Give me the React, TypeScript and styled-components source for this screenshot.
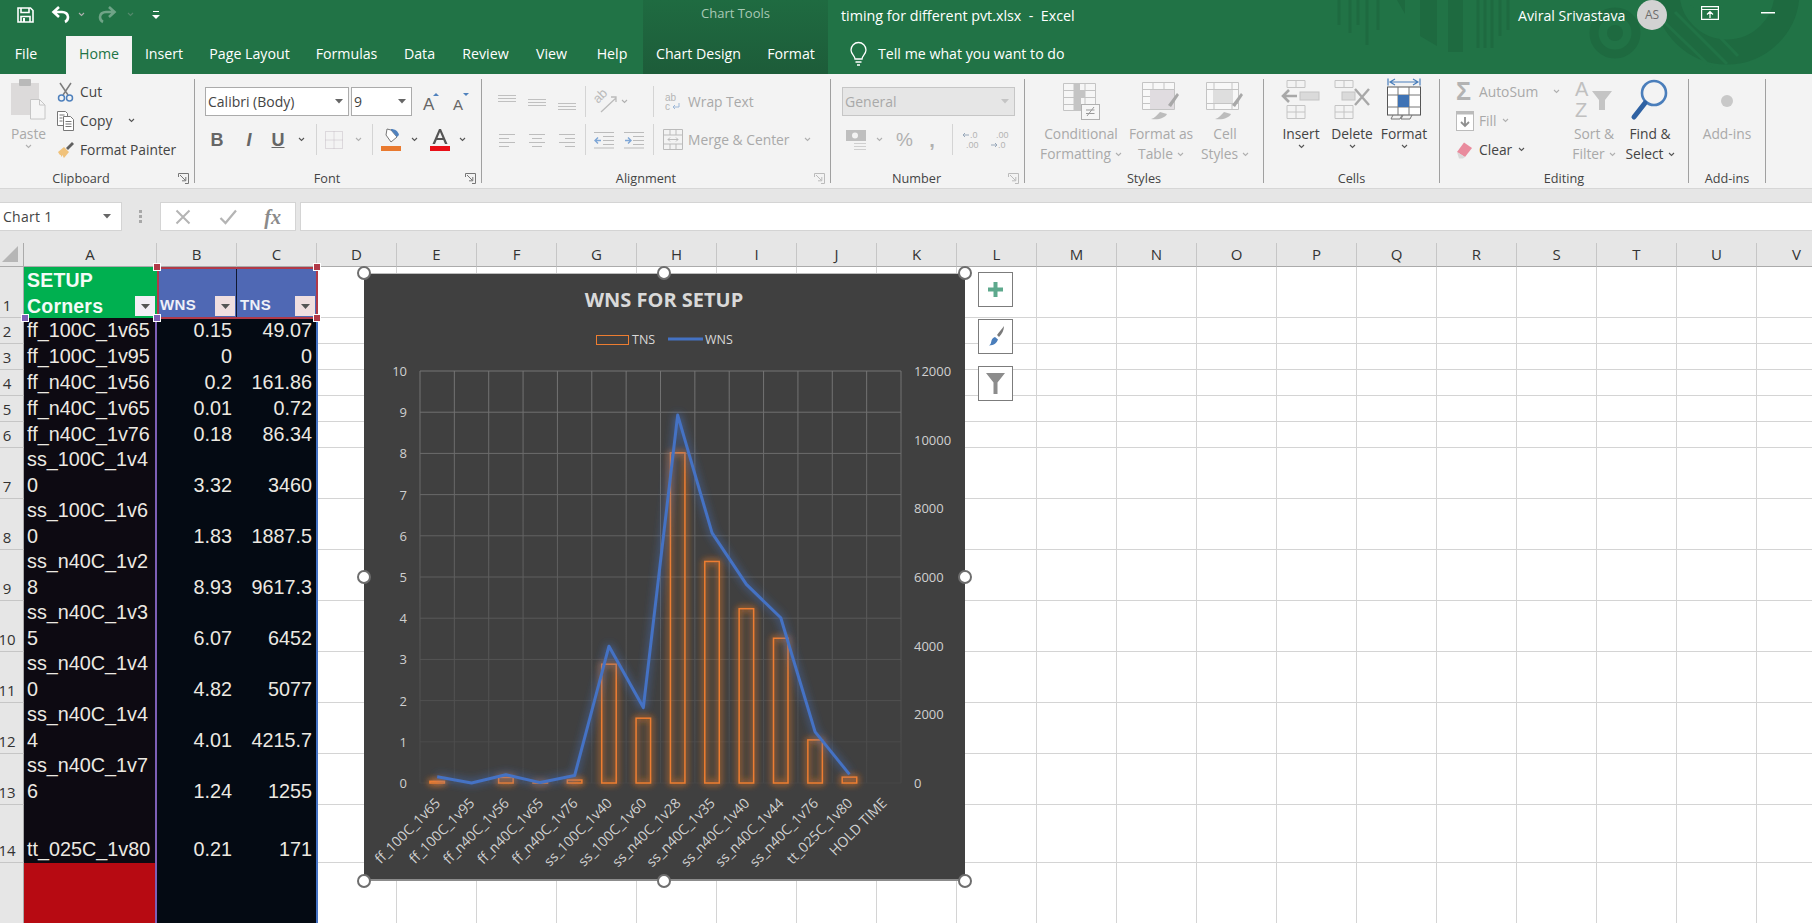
import React from 'react';
import styled, { createGlobalStyle } from 'styled-components';

const GlobalStyle = createGlobalStyle`
  html, body { margin: 0; padding: 0; background: #fff; overflow: hidden; }
  #root { width: 1812px; height: 923px; }
  svg { overflow: visible; }
`;

const UI_FONT = `'Open Sans', 'Noto Sans', sans-serif`;
const CELL_FONT = `'Liberation Sans', Arial, sans-serif`;
const DIM = '#a9a9a9';
const INK = '#444444';

// Window shell
const Page = styled.div`
  width: 1812px;
  height: 923px;
  display: flex;
  flex-direction: column;
  overflow: hidden;
  background: #e6e6e6;
  font-family: ${UI_FONT};
`;

const Header = styled.header`
  position: relative;
  height: 74px;
  background: #217346;
  color: #fff;
  flex: none;
  overflow: hidden;
`;

const Pattern = styled.svg`
  position: absolute;
  right: 0;
  top: 0;
`;

const ContextBand = styled.div`
  position: absolute;
  left: 643px;
  top: 0;
  width: 185px;
  height: 74px;
  background: linear-gradient(#1f6b41, #1d5c39);
`;

const TitleRow = styled.div`
  position: relative;
  height: 36px;
  display: flex;
  align-items: center;
`;

const Qat = styled.div`
  width: 643px;
  height: 36px;
  padding: 0 0 7px 17px;
  box-sizing: border-box;
  display: flex;
  align-items: center;
`;

const QatSlot = styled.span<{ $w: number; $dim?: boolean }>`
  width: ${p => p.$w}px;
  display: flex;
  align-items: center;
  opacity: ${p => (p.$dim ? 0.35 : 1)};
`;

const ContextTitle = styled.div`
  width: 185px;
  height: 36px;
  padding-bottom: 10px;
  box-sizing: border-box;
  font-size: 13px;
  color: #a9c9b6;
  display: flex;
  align-items: center;
  justify-content: center;
`;

const DocTitle = styled.div`
  margin-left: 13px;
  width: 677px;
  font-size: 14.3px;
  padding-bottom: 6px;
  white-space: pre;
`;

const UserName = styled.div`
  width: 119px;
  font-size: 14.2px;
  padding-bottom: 6px;
`;

const Avatar = styled.div`
  width: 30px;
  height: 30px;
  border-radius: 50%;
  background: #d2d2d2;
  color: #6d6d6d;
  font-size: 12px;
  display: flex;
  align-items: center;
  justify-content: center;
  margin-bottom: 7px;
`;

const WinButtons = styled.div`
  margin-left: 34px;
  padding-bottom: 10px;
  display: flex;
  align-items: center;
  gap: 42px;
`;

const TabRow = styled.nav`
  position: relative;
  height: 38px;
  display: flex;
  align-items: stretch;
`;

const Tab = styled.div<{ $w: number; $active?: boolean }>`
  width: ${p => p.$w}px;
  display: flex;
  align-items: center;
  justify-content: center;
  font-size: 14.2px;
  padding-bottom: 3px;
  box-sizing: border-box;
  background: ${p => (p.$active ? '#f3f3f3' : 'transparent')};
  color: ${p => (p.$active ? '#217346' : '#fff')};
`;

const TellMe = styled.div`
  margin-left: 22px;
  display: flex;
  align-items: center;
  gap: 11px;
  font-size: 14.2px;
  padding-bottom: 3px;
`;

// Ribbon
const Ribbon = styled.section`
  height: 115px;
  box-sizing: border-box;
  padding-top: 5px;
  background: #f3f3f3;
  display: flex;
  border-bottom: 1px solid #d6d6d6;
  flex: none;
`;

const Group = styled.div<{ $w: number }>`
  position: relative;
  width: ${p => p.$w}px;
  height: 104px;
  box-sizing: border-box;
  border-right: 1px solid #a0a0a0;
  display: flex;
  flex-direction: column;
  flex: none;
`;

const GroupBody = styled.div<{ $pl?: number }>`
  flex: 1;
  min-height: 0;
  display: flex;
  padding-left: ${p => p.$pl ?? 0}px;
`;

const GroupLabel = styled.div<{ $pr?: number }>`
  height: 16px;
  margin-bottom: -3px;
  padding-right: ${p => p.$pr ?? 0}px;
  font-size: 12.7px;
  line-height: 16px;
  color: #444;
  text-align: center;
`;

const Launcher = styled.svg`
  position: absolute;
  right: 5px;
  bottom: -1px;
`;

const BigButton = styled.div<{ $w: number }>`
  width: ${p => p.$w}px;
  display: flex;
  flex-direction: column;
  align-items: center;
  flex: none;
`;

const BigIcon = styled.div`
  height: 45px;
  display: flex;
  align-items: flex-end;
  justify-content: center;
  padding-bottom: 4px;
  box-sizing: border-box;
`;

const BigText = styled.div<{ $dim?: boolean }>`
  font-size: 13.8px;
  line-height: 20px;
  color: ${p => (p.$dim ? DIM : INK)};
  text-align: center;
  white-space: nowrap;
  display: flex;
  align-items: center;
  gap: 4px;
`;

const ListColumn = styled.div<{ $w?: number }>`
  width: ${p => (p.$w ? `${p.$w}px` : 'auto')};
  margin-top: -2px;
  display: flex;
  flex-direction: column;
  flex: none;
`;

const ListRow = styled.div`
  height: 29px;
  display: flex;
  align-items: center;
`;

const ListIcon = styled.span<{ $w?: number }>`
  width: ${p => p.$w ?? 23}px;
  display: flex;
  align-items: center;
  flex: none;
`;

const ToolText = styled.span<{ $dim?: boolean }>`
  font-size: 13.8px;
  color: ${p => (p.$dim ? DIM : INK)};
  white-space: nowrap;
`;

const RowStack = styled.div`
  padding-top: 8px;
  display: flex;
  flex-direction: column;
  gap: 9px;
`;

const ToolRow = styled.div`
  height: 29px;
  display: flex;
  align-items: center;
`;

const Slot = styled.span<{ $w: number; $ml?: number }>`
  width: ${p => p.$w}px;
  margin-left: ${p => p.$ml ?? 0}px;
  display: flex;
  align-items: center;
  justify-content: center;
  flex: none;
`;

const Sep = styled.span<{ $ml?: number }>`
  width: 1px;
  height: 31px;
  margin-left: ${p => p.$ml ?? 0}px;
  background: #d4d4d4;
  flex: none;
`;

const Combo = styled.div<{ $w: number; $disabled?: boolean; $ml?: number }>`
  width: ${p => p.$w}px;
  height: 29px;
  margin-left: ${p => p.$ml ?? 0}px;
  box-sizing: border-box;
  padding: 0 5px 0 2px;
  background: ${p => (p.$disabled ? '#e6e6e6' : '#fff')};
  border: 1px solid ${p => (p.$disabled ? '#c6c6c6' : '#ababab')};
  display: flex;
  align-items: center;
  justify-content: space-between;
  font-size: 14px;
  color: ${p => (p.$disabled ? DIM : INK)};
  flex: none;
`;

const GlyphText = styled.span<{ $size: number; $color?: string; $weight?: number; $italic?: boolean; $under?: boolean; $serif?: boolean }>`
  font-family: ${p => (p.$serif ? `'Liberation Serif', serif` : CELL_FONT)};
  font-size: ${p => p.$size}px;
  line-height: 1;
  font-weight: ${p => p.$weight ?? 400};
  font-style: ${p => (p.$italic ? 'italic' : 'normal')};
  text-decoration: ${p => (p.$under ? 'underline' : 'none')};
  color: ${p => p.$color ?? '#666'};
`;

const RibbonLabel = styled(ToolText)<{ $ml: number }>`
  margin-left: ${p => p.$ml}px;
`;

// Formula bar
const FormulaBar = styled.div`
  height: 54px;
  padding: 13px 0 12px;
  box-sizing: border-box;
  display: flex;
  align-items: stretch;
  flex: none;
`;

const NameBox = styled.div`
  width: 122px;
  box-sizing: border-box;
  padding: 0 10px 0 3px;
  background: #fff;
  border: 1px solid #d4d4d4;
  border-left: none;
  display: flex;
  align-items: center;
  justify-content: space-between;
  font-size: 14px;
  letter-spacing: 0.3px;
  color: #444;
`;

const Grip = styled.div`
  width: 38px;
  display: flex;
  align-items: center;
  justify-content: center;
`;

const FxButtons = styled.div`
  width: 136px;
  box-sizing: border-box;
  background: #fff;
  border: 1px solid #d4d4d4;
  display: flex;
  align-items: center;
  justify-content: space-between;
  padding: 0 14px 0 14px;
`;

const FormulaInput = styled.div`
  flex: 1;
  margin-left: 4px;
  background: #fff;
  border: 1px solid #d4d4d4;
  border-right: none;
`;

// Sheet
const Sheet = styled.main`
  position: relative;
  flex: 1;
  overflow: hidden;
  background: #fff;
`;

const SheetGrid = styled.div`
  display: grid;
  grid-template-columns: 24px 133px repeat(21, 80px);
  grid-template-rows: 24px 51px repeat(5, 26px) repeat(7, 51px) 58px 70px;
  width: 1837px;
`;

const Corner = styled.div`
  background: #e6e6e6;
  border-right: 1px solid #ababab;
  border-bottom: 1px solid #ababab;
  box-sizing: border-box;
  display: flex;
  align-items: flex-end;
  justify-content: center;
  padding: 0 4px 4px 0;
`;

const ColHead = styled.div`
  background: #e6e6e6;
  border-right: 1px solid #c6c6c6;
  border-bottom: 1px solid #ababab;
  box-sizing: border-box;
  font-size: 15px;
  color: #333;
  text-align: center;
  line-height: 23px;
`;

const RowHead = styled.div`
  background: #e6e6e6;
  border-right: 1px solid #ababab;
  border-bottom: 1px solid #c6c6c6;
  box-sizing: border-box;
  font-size: 15px;
  line-height: 23px;
  color: #333;
  padding-right: 9px;
  text-align: center;
  display: flex;
  align-items: flex-end;
  justify-content: center;
`;

const cellBg: Record<string, string> = {
  green: '#00b050',
  blue: '#4f68b4',
  name: '#0d0a12',
  value: '#040a13',
  red: '#b70a12',
  empty: '#fff',
};

const Cell = styled.div<{ $kind: string }>`
  position: relative;
  box-sizing: border-box;
  background: ${p => cellBg[p.$kind]};
  border-right: 1px solid ${p => (p.$kind === 'empty' ? '#d4d4d4' : p.$kind === 'blue' ? '#101830' : cellBg[p.$kind])};
  border-bottom: 1px solid ${p => (p.$kind === 'empty' ? '#d4d4d4' : cellBg[p.$kind])};
  font-family: ${CELL_FONT};
  color: #ece9e2;
  overflow: hidden;
`;

const NameText = styled.div`
  position: absolute;
  left: 3px;
  right: 3px;
  bottom: 0;
  font-size: 19.8px;
  line-height: 25.5px;
  word-break: break-all;
`;

const ValueText = styled.div`
  position: absolute;
  right: 4px;
  bottom: 0;
  font-size: 19.8px;
  line-height: 25.5px;
`;

const HeadBig = styled.div`
  padding-left: 3px;
  font-size: 19.5px;
  font-weight: 700;
  line-height: 26px;
  color: #f4fbf6;
  letter-spacing: 0.2px;
`;

const HeadSmall = styled.div`
  position: absolute;
  left: 3px;
  bottom: 2px;
  font-size: 15px;
  font-weight: 700;
  line-height: 20px;
  color: #eef0f8;
  letter-spacing: 0.4px;
`;

const FilterButton = styled.div<{ $tint: string }>`
  position: absolute;
  right: 1px;
  bottom: 1px;
  width: 20px;
  height: 20px;
  background: ${p => p.$tint};
  display: flex;
  align-items: center;
  justify-content: center;
`;

const RangeBox = styled.div<{ $x: number; $y: number; $w: number; $h: number; $color: string; $only?: boolean }>`
  position: absolute;
  left: ${p => p.$x}px;
  top: ${p => p.$y}px;
  width: ${p => p.$w}px;
  height: ${p => p.$h}px;
  box-sizing: border-box;
  border: 2px solid ${p => p.$color};
  ${p => p.$only && 'border-top: none; border-bottom: none; border-left: none;'}
`;

const RangeHandle = styled.div<{ $x: number; $y: number; $color: string }>`
  position: absolute;
  left: ${p => p.$x - 3}px;
  top: ${p => p.$y - 3}px;
  width: 6px;
  height: 6px;
  background: ${p => p.$color};
  outline: 1px solid #fff;
`;

const ChartFrame = styled.div`
  position: absolute;
  left: 364px;
  top: 30px;
  width: 601px;
  height: 608px;
  background: #404040;
  box-shadow: inset 0 1px 0 #bdbdbd;
  border-bottom: 2px solid #8c8c8c;
  box-sizing: border-box;
`;

const ChartSvg = styled.svg`
  display: block;
  font-family: ${UI_FONT};
`;

const SizeHandle = styled.div<{ $x: number; $y: number }>`
  position: absolute;
  left: ${p => p.$x - 7}px;
  top: ${p => p.$y - 7}px;
  width: 14px;
  height: 14px;
  box-sizing: border-box;
  border-radius: 50%;
  background: #fff;
  border: 2.5px solid #6e6e6e;
`;

const ChartTools = styled.div`
  position: absolute;
  left: 978px;
  top: 29px;
  display: flex;
  flex-direction: column;
  gap: 12px;
`;

const ChartToolButton = styled.div`
  width: 35px;
  height: 35px;
  box-sizing: border-box;
  background: #fff;
  border: 1px solid #7c7c7c;
  display: flex;
  align-items: center;
  justify-content: center;
`;

// Icons
const Chev = ({ dark }: { dark?: boolean }) => (
  <svg width="7" height="5" viewBox="0 0 7 5">
    <path d="M1 1l2.500 2.500L6 1" fill="none" stroke={dark ? '#555' : '#b0b0b0'} strokeWidth="1.1" />
  </svg>
);

const DropArrow = ({ color = '#666' }: { color?: string }) => (
  <svg width="8" height="5" viewBox="0 0 8 5"><path d="M0 0h8L4 4.500z" fill={color} /></svg>
);

const LauncherIcon = ({ dim }: { dim?: boolean }) => (
  <Launcher width="11" height="11" viewBox="0 0 11 11">
    <path d="M.5 4V.5h10v10H7M2 2l5.500 5.500M7.800 4v3.800H4" fill="none" stroke={dim ? '#bbb' : '#777'} />
  </Launcher>
);

const AlignV = ({ y }: { y: number }) => (
  <svg width="18" height="18" viewBox="0 0 18 18">
    {[0, 3, 6].map(d => <rect key={d} x="0" y={y + d} width="18" height="1" fill="#c0c0c0" />)}
  </svg>
);

const AlignH = ({ kind }: { kind: 'l' | 'c' | 'r' }) => {
  const x = (w: number) => (kind === 'l' ? 0 : kind === 'c' ? (16 - w) / 2 : 16 - w);
  return (
    <svg width="16" height="16" viewBox="0 0 16 16">
      {[16, 10, 16, 10].map((w, i) => <rect key={i} x={x(w)} y={2 + i * 4} width={w} height="1" fill="#bdbdbd" />)}
    </svg>
  );
};

const SaveIcon = () => (
  <svg width="17" height="16" viewBox="0 0 17 16" fill="none" stroke="#fff" strokeWidth="1.6">
    <path d="M1 1h12.500L16 3.500V15H1zM4 1v4.500h8V1M4 15V9.500h9V15" />
    <rect x="6" y="11" width="2" height="4" fill="#fff" stroke="none" />
  </svg>
);

const UndoIcon = ({ flip }: { flip?: boolean }) => (
  <svg width="19" height="17" viewBox="0 0 19 17" fill="none" stroke="#fff" strokeWidth="2.6" style={flip ? { transform: 'scaleX(-1)' } : undefined}>
    <path d="M8 1L2.500 6 8 11M3 6h8c3.500 0 6 2 6 5 0 2-1 4-3 5" />
  </svg>
);

const CustomizeIcon = () => (
  <svg width="8" height="10" viewBox="0 0 8 10"><path d="M1 1h6v1H1zM0 5h8L4 9z" fill="#fff" /></svg>
);

const BulbIcon = () => (
  <svg width="17" height="24" viewBox="0 0 17 24" fill="none" stroke="#fff" strokeWidth="1.3">
    <path d="M5 17c0-3-4-5-4-9a7.500 7.500 0 0 1 15 0c0 4-4 6-4 9zM5.500 20h6M7 23h3" />
  </svg>
);

const RibbonDisplayIcon = () => (
  <svg width="18" height="14" viewBox="0 0 18 14" fill="none" stroke="#fff" strokeWidth="1.2">
    <path d="M.6.6h16.800v12.800H.6zM.6 3.500h16.800M9 12V6M6 8.500L9 5.500l3 3" />
  </svg>
);

const PasteIcon = () => (
  <svg width="36" height="42" viewBox="0 0 36 42">
    <rect x="0" y="5" width="28" height="32" fill="#dcdada" />
    <rect x="8" y="1" width="12" height="7" rx="1" fill="#b9b9b9" />
    <path d="M19.500 21.500h9l5.500 5.500v14H19.500z" fill="#f5f5f5" stroke="#c6c6c6" />
    <path d="M28.500 21.500V27H34" fill="none" stroke="#c6c6c6" />
  </svg>
);

const CutIcon = () => (
  <svg width="17" height="20" viewBox="0 0 17 20" fill="none">
    <path d="M3 1l8 12M14 1L6 13" stroke="#7d7d7d" strokeWidth="1.5" />
    <circle cx="4.500" cy="16" r="3" stroke="#4f81bd" strokeWidth="1.5" />
    <circle cx="12.500" cy="16" r="3" stroke="#4f81bd" strokeWidth="1.5" />
  </svg>
);

const CopyIcon = () => (
  <svg width="17" height="20" viewBox="0 0 17 20" fill="#fff" stroke="#777">
    <path d="M.5.500h8l2 2v12H.5z" />
    <path d="M6.500 5.500h7l3 3v11h-10z" />
    <path d="M2.500 4h5M2.500 7h3M2.500 10h3M8.500 10.500h6M8.500 13h6M8.500 15.500h6" fill="none" />
  </svg>
);

const PainterIcon = () => (
  <svg width="18" height="18" viewBox="0 0 18 18">
    <path d="M1 11l6-5 5 5-5 6c-1-1-1-2-1-3l-2 2c0-2 0-2-1-2 0 0-1-1-2-3z" fill="#f0c27b" />
    <path d="M9 7l6-6 2 2-6 6z" fill="#606060" />
  </svg>
);

const GrowFont = ({ up }: { up: boolean }) => (
  <svg width="16" height="20" viewBox="0 0 16 20">
    <text x="0" y="18" fontFamily="Liberation Sans" fontSize={up ? 17 : 15} fill="#666">A</text>
    <path d={up ? 'M10 4l3-3 3 3z' : 'M10 1l3 3 3-3z'} fill="#4f81bd" />
  </svg>
);

const BorderIcon = () => (
  <svg width="18" height="18" viewBox="0 0 18 18" fill="none" stroke="#c4bcc4" strokeDasharray="1 1">
    <path d="M.5.500h17v17H.5zM9 .5v17M.5 9h17" />
  </svg>
);

const FillIcon = () => (
  <svg width="20" height="24" viewBox="0 0 20 24">
    <path d="M6 1l-1 6 5 7 6-5-6-7z" fill="#fff" stroke="#777" />
    <path d="M10 1c4 0 7 2 8 6l-2 2-6-7z" fill="#4f81bd" />
    <rect y="18" width="20" height="5" fill="#e97a2f" />
  </svg>
);

const FontColorIcon = () => (
  <svg width="20" height="24" viewBox="0 0 20 24">
    <path d="M2.500 16L9 1h2l6.500 15h-2.500l-1.700-4H6.700L5 16zM7.500 10h5L10 4z" fill="#555" />
    <rect y="18" width="20" height="5" fill="#e90f18" />
  </svg>
);

const OrientIcon = () => (
  <svg width="23" height="22" viewBox="0 0 23 22" fill="none" stroke="#bbb" strokeWidth="1.3">
    <text transform="translate(3 13) rotate(-45)" x="0" y="0" fontFamily="Liberation Sans" fontSize="13" fill="#bbb" stroke="none">ab</text>
    <path d="M6 21L21 7M16 6h5v5" />
  </svg>
);

const IndentIcon = ({ back }: { back?: boolean }) => (
  <svg width="20" height="18" viewBox="0 0 20 18" fill="none" stroke="#bbb">
    <path d="M0 1.500h20M9 5.500h11M9 9.500h11M9 13.500h11M0 17h20" />
    <path d={back ? 'M7 9.500H1M4 6.500l-3 3 3 3' : 'M1 9.500h6M4 6.500l3 3-3 3'} stroke="#7ea6d6" strokeWidth="1.4" />
  </svg>
);

const WrapIcon = () => (
  <svg width="16" height="18" viewBox="0 0 16 18" fill="none" stroke="#b5b5b5">
    <text x="0" y="8" fontFamily="Liberation Sans" fontSize="10" fill="#b5b5b5" stroke="none">ab</text>
    <text x="0" y="17" fontFamily="Liberation Sans" fontSize="10" fill="#b5b5b5" stroke="none">c</text>
    <path d="M14 10v4H8M10 12l-2 2 2 2" stroke="#9db8d8" />
  </svg>
);

const MergeIcon = () => (
  <svg width="20" height="21" viewBox="0 0 20 21" fill="none" stroke="#bbb">
    <path d="M.5.500h19v20H.5zM.5 6h19M.5 15h19M7 .5V6M13 .5V6M7 15v5.500M13 15v5.500M5 10.500h10M7 8.500l-2 2 2 2M13 8.500l2 2-2 2" />
  </svg>
);

const AccountingIcon = () => (
  <svg width="21" height="22" viewBox="0 0 21 22">
    <rect x="0" y="1" width="20" height="11" fill="#bfbfbf" />
    <circle cx="9" cy="6.500" r="3" fill="#f3f3f3" />
    <path d="M8 14.500h12M8 17.500h12M8 20.500h12" stroke="#cfcfcf" />
  </svg>
);

const DecimalIcon = ({ more }: { more?: boolean }) => (
  <svg width="18" height="20" viewBox="0 0 18 20">
    <text x={more ? 5 : 7} y="8" fontFamily="Liberation Sans" fontSize="9" fill="#b4b4b4">{more ? '.00' : '.0'}</text>
    <text x={more ? 7 : 3} y="18" fontFamily="Liberation Sans" fontSize="9" fill="#b4b4b4">{more ? '.0' : '.00'}</text>
    <path d={more ? 'M0 15h6M4 13l2 2-2 2' : 'M0 5h6M2 3L0 5l2 2'} stroke="#98a8ba" fill="none" />
  </svg>
);

const CondFormatIcon = () => (
  <svg width="37" height="37" viewBox="0 0 37 37" fill="none">
    <path d="M.5.500h32v27H.5zM.5 7.500h32M.5 14.500h32M.5 21.500h32M11 .5v27M22 .5v27" fill="#f6f6f6" stroke="#c4c4c4" />
    <rect x="11" y="0" width="6" height="8" fill="#c4c4c4" />
    <rect x="11" y="8" width="11" height="6" fill="#c4c4c4" />
    <rect x="11" y="15" width="7" height="12" fill="#c4c4c4" />
    <rect x="18.500" y="21.500" width="18" height="15" fill="#f6f6f6" stroke="#b0b0b0" />
    <path d="M24 33l7-9M23 27h8.500M23 30.500h8.500" stroke="#999" />
  </svg>
);

const TableStyleIcon = () => (
  <svg width="38" height="38" viewBox="0 0 38 38">
    <path d="M.5.500h32v27H.5zM.5 7.500h32M.5 14.500h32M.5 21.500h32M11 .5v27M22 .5v27" fill="#f8f8f8" stroke="#c4c4c4" />
    <rect x="8" y="8" width="24" height="19" fill="#e0dce0" />
    <path d="M26 23l9-12 2 2-8 12z" fill="#a8a8a8" />
    <path d="M9 37c4-1 6-4 9-7l7 2c-2 4-8 6-16 5z" fill="#bcbcbc" />
  </svg>
);

const CellStylesIcon = () => (
  <svg width="38" height="38" viewBox="0 0 38 38">
    <path d="M.5.500h32v27H.5zM.5 7.500h32M.5 21.500h32M8 .5v27M26 .5v27" fill="#f8f8f8" stroke="#c4c4c4" />
    <rect x="8" y="8" width="18" height="13" fill="#dedede" />
    <path d="M26 23l9-12 2 2-8 12z" fill="#a8a8a8" />
    <path d="M9 37c4-1 6-4 9-7l7 2c-2 4-8 6-16 5z" fill="#bcbcbc" />
  </svg>
);

const InsertIcon = () => (
  <svg width="36" height="40" viewBox="0 0 36 40">
    <path d="M4 .5h18v7H4zM13 .5v7M4 25.500h18v13H4zM13 25.500v13M4 32h18" fill="none" stroke="#c4c4c4" />
    <rect x="17" y="12" width="19" height="8" fill="#dadada" stroke="#c4c4c4" />
    <path d="M0 16h14M6 10l-6 6 6 6" fill="none" stroke="#a8a8a8" strokeWidth="2.600" />
  </svg>
);

const DeleteIcon = () => (
  <svg width="36" height="40" viewBox="0 0 36 40">
    <path d="M1 .5h18v7H1zM10 .5v7M1 25.500h18v13H1zM10 25.500v13M1 32h18" fill="none" stroke="#c4c4c4" />
    <rect x="8" y="12" width="13" height="8" fill="#dadada" stroke="#c4c4c4" />
    <path d="M21 9l14 16M35 9L21 25" stroke="#a8a8a8" strokeWidth="2.400" />
  </svg>
);

const FormatCellsIcon = () => (
  <svg width="34" height="42" viewBox="0 0 34 42">
    <path d="M1 .5v7M33 .5v7M3 4h28M8 1L3 4l5 3M26 1l5 3-5 3" fill="none" stroke="#4a7ebb" strokeWidth="1.200" />
    <rect x=".5" y="9" width="33" height="28" fill="#fff" stroke="#555" />
    <path d="M11 9v28M22 9v28M.5 17h33M.5 29h33" stroke="#777" fill="none" />
    <rect x="11" y="17" width="11" height="12" fill="#3f73b5" />
    <path d="M6 37l-2 4h9l2-4M16 37l-2 4h9l2-4" fill="none" stroke="#777" />
  </svg>
);

const FillDownIcon = () => (
  <svg width="18" height="20" viewBox="0 0 18 20" fill="none">
    <rect x=".5" y=".5" width="17" height="19" fill="#fff" stroke="#bbb" />
    <rect x=".5" y=".5" width="17" height="3" fill="#bbb" />
    <path d="M9 6v9M5 11l4 4 4-4" stroke="#8f8f8f" strokeWidth="1.800" />
  </svg>
);

const EraserIcon = () => (
  <svg width="17" height="18" viewBox="0 0 17 18">
    <path d="M8 1.500l8 5.500-7 9-8-5z" fill="#e98b9d" />
    <path d="M1 11l8 5-2 1.500H3z" fill="#d9d9d9" />
  </svg>
);

const SortFilterIcon = () => (
  <svg width="38" height="40" viewBox="0 0 38 40">
    <text x="0" y="16" fontFamily="Liberation Sans" fontSize="20" fill="#c0c0c0">A</text>
    <text x="0" y="37" fontFamily="Liberation Sans" fontSize="20" fill="#c0c0c0">Z</text>
    <path d="M17 11h20l-7 9v10l-6 0V20z" fill="#c4c4c4" />
  </svg>
);

const FindIcon = () => (
  <svg width="38" height="42" viewBox="0 0 38 42" fill="none">
    <circle cx="23" cy="15" r="12" stroke="#4a7ebb" strokeWidth="2.600" />
    <path d="M14 25L3 39" stroke="#2f62a3" strokeWidth="5" strokeLinecap="round" />
  </svg>
);

const XIcon = () => (
  <svg width="16" height="16" viewBox="0 0 16 16"><path d="M1.500 1.500l13 13M14.500 1.500l-13 13" stroke="#b4b4b4" strokeWidth="2" /></svg>
);

const CheckIcon = () => (
  <svg width="18" height="16" viewBox="0 0 18 16"><path d="M1.500 9l5 5L17 1.500" stroke="#b4b4b4" strokeWidth="2.200" fill="none" /></svg>
);

const GripIcon = () => (
  <svg width="4" height="14" viewBox="0 0 4 14" fill="#a8a8a8">
    <rect y="0" width="3" height="3" /><rect y="5" width="3" height="3" /><rect y="10" width="3" height="3" />
  </svg>
);

const FilterArrow = () => (
  <svg width="9" height="5" viewBox="0 0 9 5"><path d="M0 0h9L4.500 5z" fill="#555" /></svg>
);

const PlusIcon = () => (
  <svg width="15" height="15" viewBox="0 0 15 15"><path d="M5.500 0h4v5.500H15v4H9.500V15h-4V9.500H0v-4h5.500z" fill="#5ea98d" /></svg>
);

const BrushIcon = () => (
  <svg width="18" height="22" viewBox="0 0 18 22">
    <path d="M17 0c0 4-2 8-5 11l-2-2c2-3 5-6 7-9z" fill="#7a7a7a" />
    <path d="M8 11l3 2.500c-1 3-4 6-9 6 2-1 2-3 2.500-5 .5-2 2-3 3.500-3.500z" fill="#4a7ebb" />
  </svg>
);

const FunnelIcon = () => (
  <svg width="19" height="21" viewBox="0 0 19 21"><path d="M0 0h19l-7.500 9.500V21h-4V9.500z" fill="#8c8c8c" /></svg>
);

// Chart
const CATS = ['ff_100C_1v65', 'ff_100C_1v95', 'ff_n40C_1v56', 'ff_n40C_1v65', 'ff_n40C_1v76', 'ss_100C_1v40', 'ss_100C_1v60', 'ss_n40C_1v28', 'ss_n40C_1v35', 'ss_n40C_1v40', 'ss_n40C_1v44', 'ss_n40C_1v76', 'tt_025C_1v80', 'HOLD TIME'];
const WNS = [0.15, 0, 0.2, 0.01, 0.18, 3.32, 1.83, 8.93, 6.07, 4.82, 4.01, 1.24, 0.21];
const TNS = [49.07, 0, 161.86, 0.72, 86.34, 3460, 1887.5, 9617.3, 6452, 5077, 4215.7, 1255, 171];

const PLOT = { left: 56, right: 537, top: 98, bottom: 510 };
const STEP = (PLOT.right - PLOT.left) / 14;
const catX = (i: number) => PLOT.left + STEP * (i + 0.5);
const wnsY = (v: number) => PLOT.bottom - (v / 10) * (PLOT.bottom - PLOT.top);
const tnsY = (v: number) => PLOT.bottom - (v / 12000) * (PLOT.bottom - PLOT.top);

const WnsChart = () => (
  <ChartSvg width="601" height="605" viewBox="0 0 601 605">
    <defs>
      <filter id="glowOrange" x="-60%" y="-20%" width="220%" height="140%">
        <feGaussianBlur stdDeviation="3.500" result="b" />
        <feMerge><feMergeNode in="b" /><feMergeNode in="b" /><feMergeNode in="SourceGraphic" /></feMerge>
      </filter>
      <filter id="glowBlue" x="-10%" y="-10%" width="120%" height="120%">
        <feGaussianBlur stdDeviation="4.500" result="b" />
        <feMerge><feMergeNode in="b" /><feMergeNode in="SourceGraphic" /></feMerge>
      </filter>
      <linearGradient id="gridFade" gradientUnits="userSpaceOnUse" x1="0" y1={PLOT.top} x2="0" y2={PLOT.bottom}>
        <stop offset="0" stopColor="#747474" />
        <stop offset="1" stopColor="#484848" />
      </linearGradient>
    </defs>
    <text x="300" y="34" textAnchor="middle" fontSize="20" fontWeight="700" fill="#d9d9d9">WNS FOR SETUP</text>
    <rect x="232.500" y="62.500" width="32" height="9" fill="none" stroke="#ed7d31" />
    <text x="268" y="71" fontSize="12.500" fill="#d9d9d9">TNS</text>
    <line x1="304" y1="66" x2="339" y2="66" stroke="#4472c4" strokeWidth="3" />
    <text x="341" y="71" fontSize="12.500" fill="#d9d9d9">WNS</text>

    {Array.from({ length: 11 }, (_, i) => {
      const y = wnsY(i);
      return (
        <g key={i}>
          <line x1={PLOT.left} x2={PLOT.right} y1={y} y2={y} stroke="#7a7a7a" strokeOpacity={0.12 + i * 0.08} />
          <text x="43" y={y + 5} textAnchor="end" fontSize="13" fill="#d0d0d0">{i}</text>
        </g>
      );
    })}
    {Array.from({ length: 15 }, (_, i) => {
      const x = PLOT.left + STEP * i;
      return <line key={i} x1={x} x2={x} y1={PLOT.top} y2={PLOT.bottom} stroke="url(#gridFade)" />;
    })}
    {[0, 2000, 4000, 6000, 8000, 10000, 12000].map(v => (
      <text key={v} x="550" y={tnsY(v) + 5} fontSize="13" fill="#d0d0d0">{v}</text>
    ))}

    <g filter="url(#glowOrange)">
      {TNS.map((v, i) => (
        <rect key={i} x={catX(i) - 7.25} y={tnsY(v)} width="14.500" height={tnsY(0) - tnsY(v)} fill="none" stroke="#ed7d31" strokeWidth="1.500" />
      ))}
    </g>
    <polyline
      filter="url(#glowBlue)"
      points={WNS.map((v, i) => `${catX(i)},${wnsY(v)}`).join(' ')}
      fill="none"
      stroke="#4472c4"
      strokeWidth="3"
      strokeLinejoin="round"
    />
    {CATS.map((c, i) => (
      <text key={c} transform={`translate(${catX(i) + 4} 531) rotate(-45)`} textAnchor="end" fontSize="14" fill="#d0d0d0">{c}</text>
    ))}
  </ChartSvg>
);

// Sheet data
const DATA: { n: number; name: string; wns: string; tns: string }[] = [
  { n: 2, name: 'ff_100C_1v65', wns: '0.15', tns: '49.07' },
  { n: 3, name: 'ff_100C_1v95', wns: '0', tns: '0' },
  { n: 4, name: 'ff_n40C_1v56', wns: '0.2', tns: '161.86' },
  { n: 5, name: 'ff_n40C_1v65', wns: '0.01', tns: '0.72' },
  { n: 6, name: 'ff_n40C_1v76', wns: '0.18', tns: '86.34' },
  { n: 7, name: 'ss_100C_1v40', wns: '3.32', tns: '3460' },
  { n: 8, name: 'ss_100C_1v60', wns: '1.83', tns: '1887.5' },
  { n: 9, name: 'ss_n40C_1v28', wns: '8.93', tns: '9617.3' },
  { n: 10, name: 'ss_n40C_1v35', wns: '6.07', tns: '6452' },
  { n: 11, name: 'ss_n40C_1v40', wns: '4.82', tns: '5077' },
  { n: 12, name: 'ss_n40C_1v44', wns: '4.01', tns: '4215.7' },
  { n: 13, name: 'ss_n40C_1v76', wns: '1.24', tns: '1255' },
  { n: 14, name: 'tt_025C_1v80', wns: '0.21', tns: '171' },
];

const COLS = 'ABCDEFGHIJKLMNOPQRSTUV'.split('');
const BLANK_COLS = COLS.slice(3);

const TitleBarContent = () => (
  <TitleRow>
    <Qat>
      <QatSlot $w={34}><SaveIcon /></QatSlot>
      <QatSlot $w={27}><UndoIcon /></QatSlot>
      <QatSlot $w={20}><Chev /></QatSlot>
      <QatSlot $w={29} $dim><UndoIcon flip /></QatSlot>
      <QatSlot $w={25} $dim><Chev /></QatSlot>
      <QatSlot $w={10}><CustomizeIcon /></QatSlot>
    </Qat>
    <ContextTitle>Chart Tools</ContextTitle>
    <DocTitle>timing for different pvt.xlsx  -  Excel</DocTitle>
    <UserName>Aviral Srivastava</UserName>
    <Avatar>AS</Avatar>
    <WinButtons>
      <RibbonDisplayIcon />
      <svg width="14" height="2" viewBox="0 0 14 2"><rect width="14" height="1.500" fill="#fff" /></svg>
    </WinButtons>
  </TitleRow>
);

const Tabs = () => (
  <TabRow>
    <Tab $w={52}>File</Tab>
    <Tab $w={14} />
    <Tab $w={66} $active>Home</Tab>
    <Tab $w={64}>Insert</Tab>
    <Tab $w={107}>Page Layout</Tab>
    <Tab $w={87}>Formulas</Tab>
    <Tab $w={59}>Data</Tab>
    <Tab $w={73}>Review</Tab>
    <Tab $w={59}>View</Tab>
    <Tab $w={62}>Help</Tab>
    <Tab $w={111}>Chart Design</Tab>
    <Tab $w={74}>Format</Tab>
    <TellMe><BulbIcon />Tell me what you want to do</TellMe>
  </TabRow>
);

const RibbonBar = () => (
  <Ribbon>
    <Group $w={195}>
      <GroupBody>
        <BigButton $w={57}>
          <BigIcon><PasteIcon /></BigIcon>
          <BigText $dim>Paste</BigText>
          <BigText><Chev /></BigText>
        </BigButton>
        <ListColumn>
          <ListRow><ListIcon><CutIcon /></ListIcon><ToolText>Cut</ToolText></ListRow>
          <ListRow>
            <ListIcon><CopyIcon /></ListIcon>
            <ToolText>Copy</ToolText>
            <Slot $w={14} $ml={12}><Chev dark /></Slot>
          </ListRow>
          <ListRow><ListIcon><PainterIcon /></ListIcon><ToolText>Format Painter</ToolText></ListRow>
        </ListColumn>
      </GroupBody>
      <GroupLabel $pr={32}>Clipboard</GroupLabel>
      <LauncherIcon />
    </Group>

    <Group $w={287}>
      <GroupBody $pl={10}>
        <RowStack>
          <ToolRow>
            <Combo $w={144}>Calibri (Body)<DropArrow /></Combo>
            <Combo $w={61} $ml={2}>9<DropArrow /></Combo>
            <Slot $w={16} $ml={11}><GrowFont up /></Slot>
            <Slot $w={16} $ml={14}><GrowFont up={false} /></Slot>
          </ToolRow>
          <ToolRow>
            <Slot $w={24}><GlyphText $size={18} $weight={700}>B</GlyphText></Slot>
            <Slot $w={40}><GlyphText $size={18} $weight={700} $italic>I</GlyphText></Slot>
            <Slot $w={18}><GlyphText $size={18} $weight={700} $under>U</GlyphText></Slot>
            <Slot $w={29}><Chev dark /></Slot>
            <Sep />
            <Slot $w={34}><BorderIcon /></Slot>
            <Slot $w={14}><Chev /></Slot>
            <Sep $ml={7} />
            <Slot $w={36}><FillIcon /></Slot>
            <Slot $w={10}><Chev dark /></Slot>
            <Slot $w={20} $ml={11}><FontColorIcon /></Slot>
            <Slot $w={10} $ml={7}><Chev dark /></Slot>
          </ToolRow>
        </RowStack>
      </GroupBody>
      <GroupLabel $pr={22}>Font</GroupLabel>
      <LauncherIcon />
    </Group>

    <Group $w={349}>
      <GroupBody $pl={16}>
        <RowStack>
          <ToolRow>
            <Slot $w={18}><AlignV y={2} /></Slot>
            <Slot $w={18} $ml={12}><AlignV y={6} /></Slot>
            <Slot $w={18} $ml={12}><AlignV y={10} /></Slot>
            <Sep $ml={9} />
            <Slot $w={23} $ml={9}><OrientIcon /></Slot>
            <Slot $w={12}><Chev /></Slot>
            <Sep $ml={23} />
            <Slot $w={16} $ml={11}><WrapIcon /></Slot>
            <RibbonLabel $dim $ml={7}>Wrap Text</RibbonLabel>
          </ToolRow>
          <ToolRow>
            <Slot $w={18}><AlignH kind="l" /></Slot>
            <Slot $w={18} $ml={12}><AlignH kind="c" /></Slot>
            <Slot $w={18} $ml={12}><AlignH kind="r" /></Slot>
            <Sep $ml={9} />
            <Slot $w={20} $ml={8}><IndentIcon back /></Slot>
            <Slot $w={20} $ml={10}><IndentIcon /></Slot>
            <Sep $ml={9} />
            <Slot $w={20} $ml={9}><MergeIcon /></Slot>
            <RibbonLabel $dim $ml={5}>Merge &amp; Center</RibbonLabel>
            <Slot $w={8} $ml={14}><Chev /></Slot>
          </ToolRow>
        </RowStack>
      </GroupBody>
      <GroupLabel $pr={20}>Alignment</GroupLabel>
      <LauncherIcon dim />
    </Group>

    <Group $w={194}>
      <GroupBody $pl={11}>
        <RowStack>
          <ToolRow>
            <Combo $w={173} $disabled>General<DropArrow color="#c4c4c4" /></Combo>
          </ToolRow>
          <ToolRow>
            <Slot $w={21} $ml={4}><AccountingIcon /></Slot>
            <Slot $w={8} $ml={8}><Chev /></Slot>
            <Slot $w={17} $ml={13}><GlyphText $size={19} $color="#b0b0b0">%</GlyphText></Slot>
            <Slot $w={8} $ml={15}><GlyphText $size={20} $weight={700} $color="#b0b0b0">,</GlyphText></Slot>
            <Sep $ml={16} />
            <Slot $w={18} $ml={10}><DecimalIcon /></Slot>
            <Slot $w={18} $ml={10}><DecimalIcon more /></Slot>
          </ToolRow>
        </RowStack>
      </GroupBody>
      <GroupLabel $pr={22}>Number</GroupLabel>
      <LauncherIcon dim />
    </Group>

    <Group $w={239}>
      <GroupBody $pl={16}>
        <BigButton $w={80}>
          <BigIcon><CondFormatIcon /></BigIcon>
          <BigText $dim>Conditional</BigText>
          <BigText $dim>Formatting <Chev /></BigText>
        </BigButton>
        <BigButton $w={80}>
          <BigIcon><TableStyleIcon /></BigIcon>
          <BigText $dim>Format as</BigText>
          <BigText $dim>Table <Chev /></BigText>
        </BigButton>
        <BigButton $w={48}>
          <BigIcon><CellStylesIcon /></BigIcon>
          <BigText $dim>Cell</BigText>
          <BigText $dim>Styles <Chev /></BigText>
        </BigButton>
      </GroupBody>
      <GroupLabel>Styles</GroupLabel>
    </Group>

    <Group $w={176}>
      <GroupBody $pl={11}>
        <BigButton $w={52}>
          <BigIcon><InsertIcon /></BigIcon>
          <BigText>Insert</BigText>
          <BigText><Chev dark /></BigText>
        </BigButton>
        <BigButton $w={50}>
          <BigIcon><DeleteIcon /></BigIcon>
          <BigText>Delete</BigText>
          <BigText><Chev dark /></BigText>
        </BigButton>
        <BigButton $w={54}>
          <BigIcon><FormatCellsIcon /></BigIcon>
          <BigText>Format</BigText>
          <BigText><Chev dark /></BigText>
        </BigButton>
      </GroupBody>
      <GroupLabel>Cells</GroupLabel>
    </Group>

    <Group $w={249}>
      <GroupBody $pl={16}>
        <ListColumn $w={109}>
          <ListRow>
            <ListIcon><GlyphText $size={25} $weight={700} $color="#b3b3b3">Σ</GlyphText></ListIcon>
            <ToolText $dim>AutoSum</ToolText>
            <Slot $w={8} $ml={14}><Chev /></Slot>
          </ListRow>
          <ListRow>
            <ListIcon><FillDownIcon /></ListIcon>
            <ToolText $dim>Fill</ToolText>
            <Slot $w={8} $ml={5}><Chev /></Slot>
          </ListRow>
          <ListRow>
            <ListIcon><EraserIcon /></ListIcon>
            <ToolText>Clear</ToolText>
            <Slot $w={8} $ml={5}><Chev dark /></Slot>
          </ListRow>
        </ListColumn>
        <BigButton $w={58}>
          <BigIcon><SortFilterIcon /></BigIcon>
          <BigText $dim>Sort &amp;</BigText>
          <BigText $dim>Filter <Chev /></BigText>
        </BigButton>
        <BigButton $w={54}>
          <BigIcon><FindIcon /></BigIcon>
          <BigText>Find &amp;</BigText>
          <BigText>Select <Chev dark /></BigText>
        </BigButton>
      </GroupBody>
      <GroupLabel>Editing</GroupLabel>
    </Group>

    <Group $w={77}>
      <GroupBody>
        <BigButton $w={76}>
          <BigIcon>
            <svg width="14" height="26" viewBox="0 0 14 26"><circle cx="7" cy="7" r="6" fill="#c8c8c8" /></svg>
          </BigIcon>
          <BigText $dim>Add-ins</BigText>
        </BigButton>
      </GroupBody>
      <GroupLabel>Add-ins</GroupLabel>
    </Group>
  </Ribbon>
);

const Formula = () => (
  <FormulaBar>
    <NameBox>Chart 1<DropArrow /></NameBox>
    <Grip><GripIcon /></Grip>
    <FxButtons>
      <XIcon />
      <CheckIcon />
      <GlyphText $size={20} $italic $weight={700} $color="#8a8a8a" $serif>fx</GlyphText>
    </FxButtons>
    <FormulaInput />
  </FormulaBar>
);

const SheetArea = () => (
  <Sheet>
    <SheetGrid>
      <Corner>
        <svg width="16" height="16" viewBox="0 0 16 16"><path d="M16 0v16H0z" fill="#b6b6b6" /></svg>
      </Corner>
      {COLS.map(c => <ColHead key={c}>{c}</ColHead>)}

      <RowHead>1</RowHead>
      <Cell $kind="green">
        <HeadBig>SETUP<br />Corners</HeadBig>
        <FilterButton $tint="#f2eff6"><FilterArrow /></FilterButton>
      </Cell>
      <Cell $kind="blue">
        <HeadSmall>WNS</HeadSmall>
        <FilterButton $tint="#f0dfe0"><FilterArrow /></FilterButton>
      </Cell>
      <Cell $kind="blue">
        <HeadSmall>TNS</HeadSmall>
        <FilterButton $tint="#f0dfe0"><FilterArrow /></FilterButton>
      </Cell>
      {BLANK_COLS.map(c => <Cell key={c} $kind="empty" />)}

      {DATA.map(row => (
        <React.Fragment key={row.n}>
          <RowHead>{row.n}</RowHead>
          <Cell $kind="name"><NameText>{row.name}</NameText></Cell>
          <Cell $kind="value"><ValueText>{row.wns}</ValueText></Cell>
          <Cell $kind="value"><ValueText>{row.tns}</ValueText></Cell>
          {BLANK_COLS.map(c => <Cell key={c} $kind="empty" />)}
        </React.Fragment>
      ))}

      <RowHead />
      <Cell $kind="red" />
      <Cell $kind="value" />
      <Cell $kind="value" />
      {BLANK_COLS.map(c => <Cell key={c} $kind="empty" />)}
    </SheetGrid>

    <RangeBox $x={155} $y={75} $w={2} $h={620} $color="#7d5fb6" $only />
    <RangeBox $x={315} $y={75} $w={3} $h={620} $color="#4472c4" $only />
    <RangeBox $x={157} $y={24} $w={161} $h={52} $color="#b13a48" />
    <RangeHandle $x={25} $y={75} $color="#7d5fb6" />
    <RangeHandle $x={157} $y={75} $color="#7d5fb6" />
    <RangeHandle $x={317} $y={75} $color="#b13a48" />
    <RangeHandle $x={157} $y={24} $color="#b13a48" />
    <RangeHandle $x={317} $y={24} $color="#b13a48" />

    <ChartFrame><WnsChart /></ChartFrame>
    <SizeHandle $x={364} $y={30} />
    <SizeHandle $x={664} $y={30} />
    <SizeHandle $x={965} $y={30} />
    <SizeHandle $x={364} $y={334} />
    <SizeHandle $x={965} $y={334} />
    <SizeHandle $x={364} $y={638} />
    <SizeHandle $x={664} $y={638} />
    <SizeHandle $x={965} $y={638} />

    <ChartTools>
      <ChartToolButton><PlusIcon /></ChartToolButton>
      <ChartToolButton><BrushIcon /></ChartToolButton>
      <ChartToolButton><FunnelIcon /></ChartToolButton>
    </ChartTools>
  </Sheet>
);

const App: React.FC = () => (
  <Page>
    <GlobalStyle />
    <Header>
      <ContextBand />
      <Pattern width="482" height="74" viewBox="0 0 482 74" fill="none" stroke="#1e6a40">
        <path d="M9 0v25M20 0v33M28 0v25M37 0v45M48 0v30" strokeWidth="3" />
        <path d="M67 0l8 14V0z" fill="#1e6a40" stroke="none" />
        <path d="M90 0h17v46L90 36z" fill="#1e6a40" stroke="none" />
        <path d="M118 0h15v52h-15z" fill="#1e6a40" stroke="none" />
        <path d="M148 0v48M155 0v48M162 0v48M170 0v36M178 0v30" strokeWidth="3" />
        <circle cx="285" cy="33" r="21" strokeWidth="9" />
        <circle cx="285" cy="33" r="8" fill="#1e6a40" stroke="none" />
        <circle cx="397" cy="-8" r="60" strokeWidth="25" />
        <path d="M330 18l52 50M345 12l52 52M360 6l48 50" strokeWidth="3" stroke="#217346" />
      </Pattern>
      <TitleBarContent />
      <Tabs />
    </Header>
    <RibbonBar />
    <Formula />
    <SheetArea />
  </Page>
);

export default App;
